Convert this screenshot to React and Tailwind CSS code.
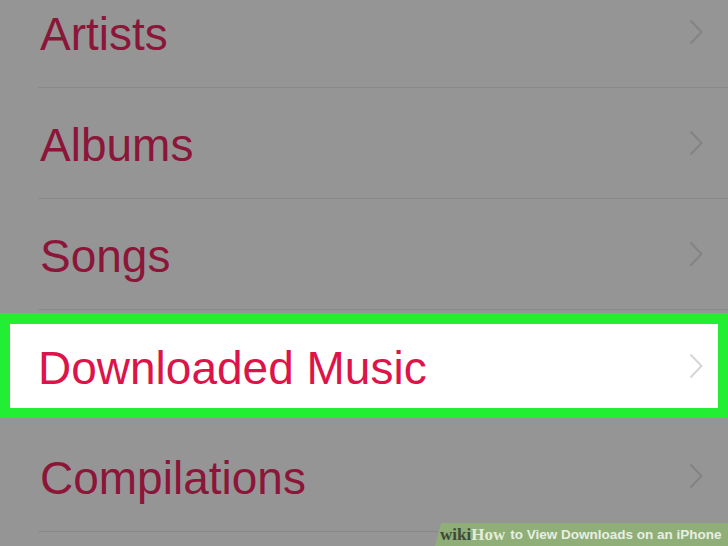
import React from "react";

const Chevron = ({ color }) => (
  <svg width="14" height="26" viewBox="0 0 14 26" fill="none">
    <polyline points="1.5,1.5 12.5,13 1.5,24.5" stroke={color} strokeWidth="2" />
  </svg>
);

const Row = ({ label }) => (
  <div className="ml-[38px] h-[111px] border-b border-[#898989] flex items-center justify-between pl-[2px] pr-[25px]">
    <span className="text-[46px] leading-none pt-[4px] text-[#8c1639]">{label}</span>
    <Chevron color="#838383" />
  </div>
);

export default function App() {
  return (
    <div
      className="relative w-[728px] h-[546px] overflow-hidden bg-[#959595]"
      style={{ fontFamily: '"Liberation Sans", Arial, sans-serif' }}
    >
      <div className="mt-[-23px] flex flex-col">
        <Row label="Artists" />
        <Row label="Albums" />
        <Row label="Songs" />

        {/* highlighted row */}
        <div className="h-[111px] pt-[3px] pb-[3px]">
          <div className="h-full border-[#22ee33] border-x-[10px] border-t-[11px] border-b-[10px] bg-white flex items-center justify-between pl-[28px] pr-[15px]">
            <span className="text-[46px] leading-none pt-[3px] text-[#dc1449]">Downloaded Music</span>
            <Chevron color="#d6d6d6" />
          </div>
        </div>

        <Row label="Compilations" />
      </div>

      {/* watermark */}
      <div className="absolute right-0 bottom-0 w-[293px] h-[23px] bg-[#8fae78] [clip-path:polygon(6px_0,100%_0,100%_100%,0_100%)] flex items-center pl-[5px] font-bold whitespace-nowrap">
        <span className="text-[17px] leading-none text-[#3e4a37]" style={{ fontFamily: '"Liberation Serif", serif' }}>wiki</span>
        <span className="text-[17px] leading-none text-[#e4ecdc] mr-[5px]" style={{ fontFamily: '"Liberation Serif", serif' }}>How</span>
        <span className="text-[13.5px] leading-none text-[#e8efe2]">to View Downloads on an iPhone</span>
      </div>
    </div>
  );
}
